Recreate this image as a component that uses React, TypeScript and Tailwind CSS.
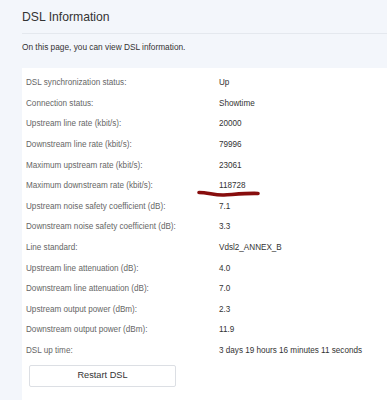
const rows: [string, string][] = [
  ["DSL synchronization status:", "Up"],
  ["Connection status:", "Showtime"],
  ["Upstream line rate (kbit/s):", "20000"],
  ["Downstream line rate (kbit/s):", "79996"],
  ["Maximum upstream rate (kbit/s):", "23061"],
  ["Maximum downstream rate (kbit/s):", "118728"],
  ["Upstream noise safety coefficient (dB):", "7.1"],
  ["Downstream noise safety coefficient (dB):", "3.3"],
  ["Line standard:", "Vdsl2_ANNEX_B"],
  ["Upstream line attenuation (dB):", "4.0"],
  ["Downstream line attenuation (dB):", "7.0"],
  ["Upstream output power (dBm):", "2.3"],
  ["Downstream output power (dBm):", "11.9"],
  ["DSL up time:", "3 days 19 hours 16 minutes 11 seconds"],
];

export default function App() {
  return (
    <div className="relative h-[400px] w-[387px] overflow-hidden bg-[#f3f6fb] pl-[22px] font-['Liberation_Sans',Arial,sans-serif]">
      <h1 className="flex h-[33px] items-center pt-[1px] text-[12.2px] text-[#333]">
        DSL Information
      </h1>
      <div className="border-t border-[#e4e8ee]" />
      <p className="flex h-[26px] items-center text-[8.3px] text-[#333]">
        On this page, you can view DSL information.
      </p>
      <div className="mt-[8px] bg-white pl-[4px] pt-[5px]">
        {rows.map(([label, value]) => (
          <div key={label} className="flex h-[20.6px] items-center text-[8.15px]">
            <span className="w-[193px] text-[#666]">{label}</span>
            <span className="text-[#333]">{value}</span>
          </div>
        ))}
        <div className="pb-[20px] pt-[4px]">
          <button className="ml-[3px] flex h-[22px] w-[147px] items-center justify-center rounded-[2px] border border-[#dcdfe4] bg-white text-[9.2px] text-[#333]">
            Restart DSL
          </button>
        </div>
      </div>
      <svg
        className="absolute left-[194px] top-[186px]"
        width="70"
        height="16"
        viewBox="0 0 70 16"
      >
        <path
          d="M5 6.5 C14 6.5 21 9.5 30 9 S54 7 64 7.5"
          fill="none"
          stroke="#870d0d"
          strokeWidth="3.6"
          strokeLinecap="round"
        />
      </svg>
    </div>
  );
}
